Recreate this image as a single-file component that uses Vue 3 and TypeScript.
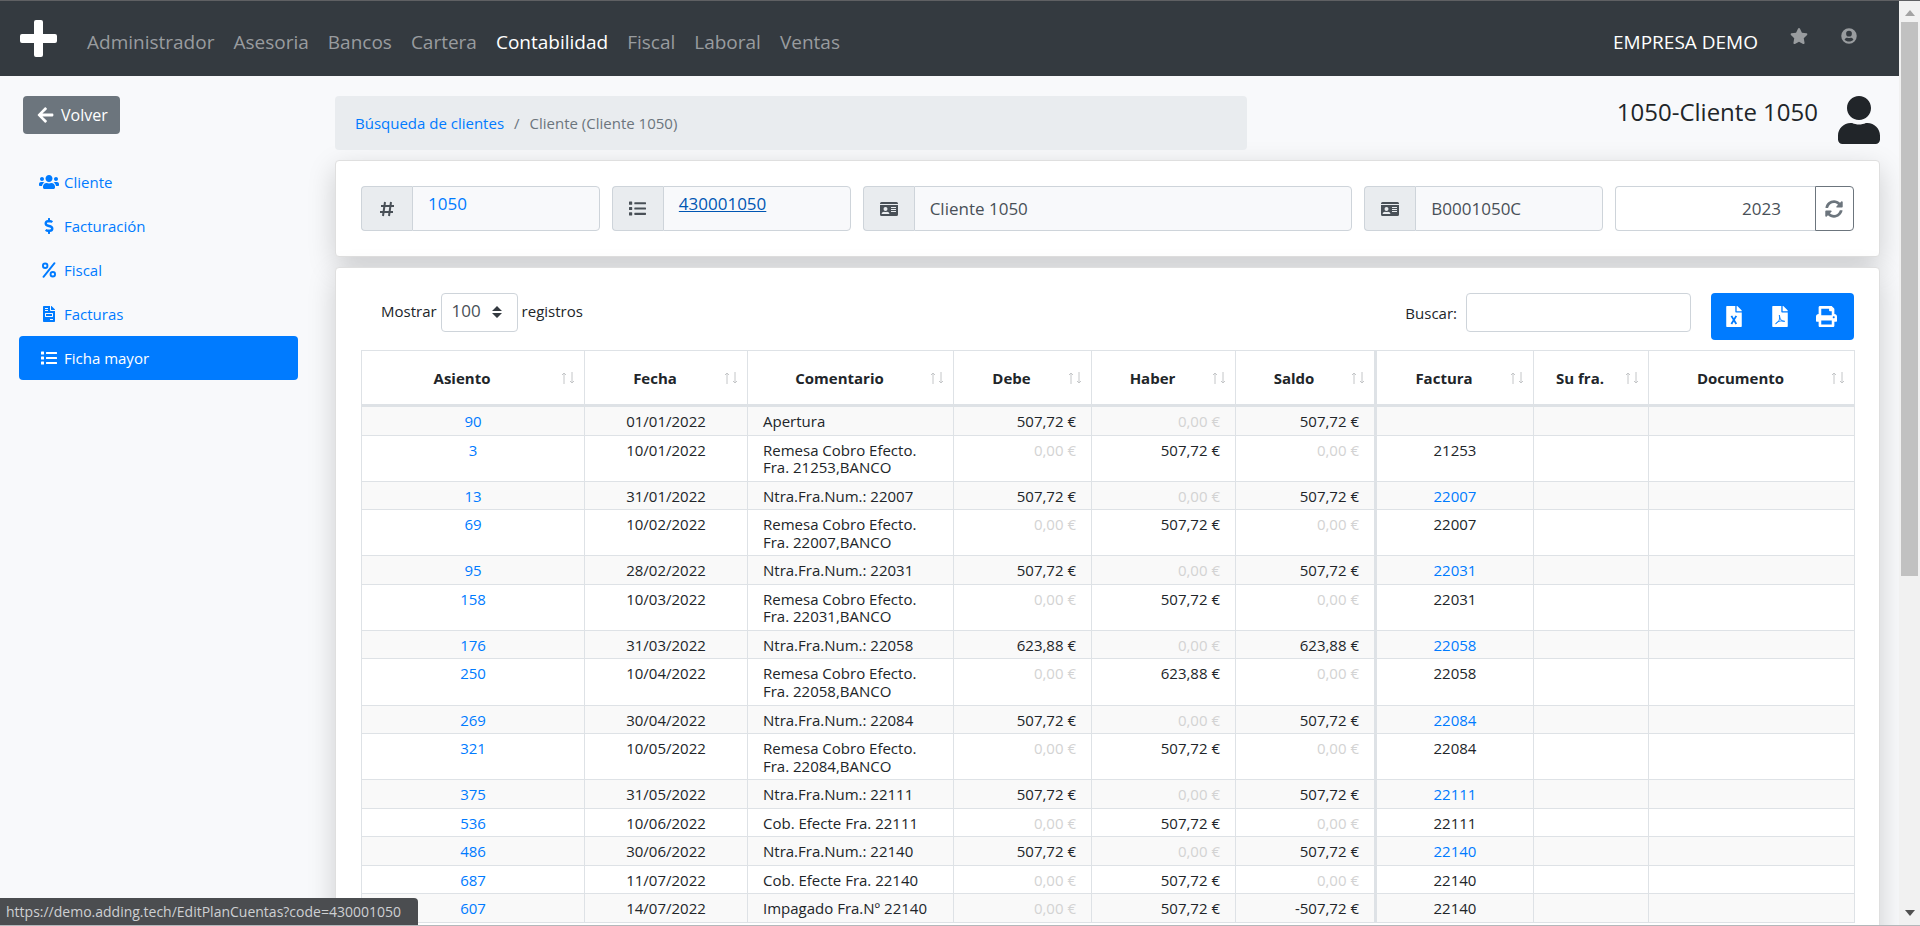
<script setup lang="ts">
import { ref } from 'vue'

interface Row {
  asiento: string
  fecha: string
  comentario: string
  debe: string
  haber: string
  saldo: string
  factura: string
  linked: boolean
}

const menu = ['Administrador', 'Asesoria', 'Bancos', 'Cartera', 'Contabilidad', 'Fiscal', 'Laboral', 'Ventas']
const current = 'Contabilidad'

const sections = [
  { label: 'Cliente', icon: 'users' },
  { label: 'Facturación', icon: 'dollar' },
  { label: 'Fiscal', icon: 'percent' },
  { label: 'Facturas', icon: 'invoice' },
  { label: 'Ficha mayor', icon: 'list' },
]
const section = 'Ficha mayor'

const columns = [
  { label: 'Asiento', cls: 'c-asiento' },
  { label: 'Fecha', cls: 'c-fecha' },
  { label: 'Comentario', cls: 'c-comentario' },
  { label: 'Debe', cls: 'c-debe' },
  { label: 'Haber', cls: 'c-haber' },
  { label: 'Saldo', cls: 'c-saldo' },
  { label: 'Factura', cls: 'c-factura' },
  { label: 'Su fra.', cls: 'c-sufra' },
  { label: 'Documento', cls: 'c-documento' },
]

const ZERO = '0,00 €'
const AMOUNT = '507,72 €'

function row(asiento: string, fecha: string, comentario: string, debe: string, haber: string, saldo: string, factura: string, linked = false): Row {
  return { asiento, fecha, comentario, debe, haber, saldo, factura, linked }
}

const rows: Row[] = [
  row('90', '01/01/2022', 'Apertura', AMOUNT, ZERO, AMOUNT, ''),
  row('3', '10/01/2022', 'Remesa Cobro Efecto. Fra. 21253,BANCO', ZERO, AMOUNT, ZERO, '21253'),
  row('13', '31/01/2022', 'Ntra.Fra.Num.: 22007', AMOUNT, ZERO, AMOUNT, '22007', true),
  row('69', '10/02/2022', 'Remesa Cobro Efecto. Fra. 22007,BANCO', ZERO, AMOUNT, ZERO, '22007'),
  row('95', '28/02/2022', 'Ntra.Fra.Num.: 22031', AMOUNT, ZERO, AMOUNT, '22031', true),
  row('158', '10/03/2022', 'Remesa Cobro Efecto. Fra. 22031,BANCO', ZERO, AMOUNT, ZERO, '22031'),
  row('176', '31/03/2022', 'Ntra.Fra.Num.: 22058', '623,88 €', ZERO, '623,88 €', '22058', true),
  row('250', '10/04/2022', 'Remesa Cobro Efecto. Fra. 22058,BANCO', ZERO, '623,88 €', ZERO, '22058'),
  row('269', '30/04/2022', 'Ntra.Fra.Num.: 22084', AMOUNT, ZERO, AMOUNT, '22084', true),
  row('321', '10/05/2022', 'Remesa Cobro Efecto. Fra. 22084,BANCO', ZERO, AMOUNT, ZERO, '22084'),
  row('375', '31/05/2022', 'Ntra.Fra.Num.: 22111', AMOUNT, ZERO, AMOUNT, '22111', true),
  row('536', '10/06/2022', 'Cob. Efecte Fra. 22111', ZERO, AMOUNT, ZERO, '22111'),
  row('486', '30/06/2022', 'Ntra.Fra.Num.: 22140', AMOUNT, ZERO, AMOUNT, '22140', true),
  row('687', '11/07/2022', 'Cob. Efecte Fra. 22140', ZERO, AMOUNT, ZERO, '22140'),
  row('607', '14/07/2022', 'Impagado Fra.Nº 22140', ZERO, AMOUNT, '-507,72 €', '22140'),
]

const year = ref('2023')
const pageSize = ref('100')
const search = ref('')
</script>

<template>
  <div class="window">
    <svg class="sprite" aria-hidden="true">
      <symbol id="i-users" viewBox="0 0 640 512">
        <path d="M96 224c35.3 0 64-28.7 64-64s-28.7-64-64-64-64 28.7-64 64 28.7 64 64 64zm448 0c35.3 0 64-28.7 64-64s-28.7-64-64-64-64 28.7-64 64 28.7 64 64 64zm32 32h-64c-17.6 0-33.5 7.1-45.1 18.6 40.3 22.1 68.9 62 75.1 109.4h66c17.7 0 32-14.3 32-32v-32c0-35.3-28.7-64-64-64zm-256 0c61.9 0 112-50.1 112-112S381.9 32 320 32 208 82.1 208 144s50.1 112 112 112zm76.8 32h-8.3c-20.8 10-43.9 16-68.5 16s-47.6-6-68.5-16h-8.3C179.6 288 128 339.6 128 403.2V432c0 26.5 21.5 48 48 48h288c26.5 0 48-21.5 48-48v-28.8c0-63.6-51.6-115.2-115.2-115.2zm-223.7-13.4C161.5 263.1 145.6 256 128 256H64c-35.3 0-64 28.7-64 64v32c0 17.7 14.3 32 32 32h65.9c6.3-47.4 34.9-87.3 75.2-109.4z" />
      </symbol>
      <symbol id="i-dollar" viewBox="0 0 288 512">
        <path d="M209.2 233.4l-108-31.6C88.7 198.2 80 186.5 80 173.5c0-16.3 13.2-29.5 29.5-29.5h66.3c12.2 0 24.2 3.7 34.2 10.5 6.1 4.1 14.3 3.1 19.5-2l34.8-34c7.1-6.9 6.1-18.4-1.8-24.5C238 74.8 207.4 64.1 176 64V16c0-8.8-7.2-16-16-16h-32c-8.8 0-16 7.2-16 16v48h-2.5C45.8 64-5.4 118.7.5 183.6c4.2 46.1 39.4 83.6 83.8 96.6l102.5 30c12.5 3.7 21.2 15.3 21.2 28.3 0 16.3-13.2 29.5-29.5 29.5h-66.3C100 368 88 364.3 78 357.5c-6.1-4.1-14.3-3.1-19.5 2l-34.8 34c-7.1 6.9-6.1 18.4 1.8 24.5 24.5 19.2 55.1 29.9 86.5 30v48c0 8.8 7.2 16 16 16h32c8.8 0 16-7.2 16-16v-48.2c46.6-.9 90.3-28.6 105.7-72.7 21.5-61.6-14.6-124.8-72.5-141.7z" />
      </symbol>
      <symbol id="i-percent" viewBox="0 0 448 512">
        <g fill="none" stroke="currentColor" stroke-width="60" stroke-linecap="round">
          <circle cx="102" cy="120" r="72" />
          <circle cx="346" cy="392" r="72" />
          <path d="M400 36L48 476" />
        </g>
      </symbol>
      <symbol id="i-invoice" viewBox="0 0 384 512">
        <path fill-rule="evenodd" d="M224 136V0H24C10.700 0 0 10.700 0 24v464c0 13.300 10.700 24 24 24h336c13.300 0 24-10.700 24-24V160H248c-13.200 0-24-10.800-24-24zM64 72c0-4 4-8 8-8h80c4 0 8 4 8 8v16c0 4-4 8-8 8H72c-4 0-8-4-8-8V72zm0 80v-16c0-4 4-8 8-8h80c4 0 8 4 8 8v16c0 4-4 8-8 8H72c-4 0-8-4-8-8zm256 288c0 4-4 8-8 8h-80c-4 0-8-4-8-8v-16c0-4 4-8 8-8h80c4 0 8 4 8 8v16zm0-200v96c0 9-7 16-16 16H80c-9 0-16-7-16-16v-96c0-9 7-16 16-16h224c9 0 16 7 16 16zM96 256v64h192v-64H96zM384 122v6H256V0h6c6 0 12 2 17 7l98 98c4 4 7 11 7 17z" />
      </symbol>
      <symbol id="i-list" viewBox="0 0 512 512">
        <path d="M80 368H16a16 16 0 0 0-16 16v64a16 16 0 0 0 16 16h64a16 16 0 0 0 16-16v-64a16 16 0 0 0-16-16zm0-320H16A16 16 0 0 0 0 64v64a16 16 0 0 0 16 16h64a16 16 0 0 0 16-16V64a16 16 0 0 0-16-16zm0 160H16a16 16 0 0 0-16 16v64a16 16 0 0 0 16 16h64a16 16 0 0 0 16-16v-64a16 16 0 0 0-16-16zm416 176H176a16 16 0 0 0-16 16v32a16 16 0 0 0 16 16h320a16 16 0 0 0 16-16v-32a16 16 0 0 0-16-16zm0-320H176a16 16 0 0 0-16 16v32a16 16 0 0 0 16 16h320a16 16 0 0 0 16-16V80a16 16 0 0 0-16-16zm0 160H176a16 16 0 0 0-16 16v32a16 16 0 0 0 16 16h320a16 16 0 0 0 16-16v-32a16 16 0 0 0-16-16z" />
      </symbol>
      <symbol id="i-idcard" viewBox="0 0 576 512">
        <path fill-rule="evenodd" d="M48 32h480a48 48 0 0 1 48 48v16H0V80a48 48 0 0 1 48-48zM0 128h576v304a48 48 0 0 1-48 48H48a48 48 0 0 1-48-48V128zm176 64a64 64 0 1 0 0 128 64 64 0 1 0 0-128zM67 416h218c10 0 17-10 14-19-10-31-40-54-75-54-29 12-66 12-96 0-35 0-65 23-75 54-3 9 4 19 14 19zM360 192c-4 0-8 4-8 8v16c0 4 4 8 8 8h144c4 0 8-4 8-8v-16c0-4-4-8-8-8H360zm0 64c-4 0-8 4-8 8v16c0 4 4 8 8 8h144c4 0 8-4 8-8v-16c0-4-4-8-8-8H360zm0 64c-4 0-8 4-8 8v16c0 4 4 8 8 8h144c4 0 8-4 8-8v-16c0-4-4-8-8-8H360z" />
      </symbol>
      <symbol id="i-file" viewBox="0 0 384 512">
        <path d="M224 136V0H24C10.700 0 0 10.700 0 24v464c0 13.300 10.700 24 24 24h336c13.300 0 24-10.700 24-24V160H248c-13.200 0-24-10.800-24-24zm160-14.100v6.100H256V0h6.100c6.400 0 12.500 2.500 17 7l97.900 98c4.500 4.500 7 10.600 7 16.900z" />
      </symbol>
    </svg>

    <div class="page">
      <nav class="navbar">
        <a href="#" class="logo" aria-label="Inicio">
          <svg viewBox="0 0 37 37"><path d="M16 0h5q2 0 2 2v12h12q2 0 2 2v5q0 2-2 2H23v12q0 2-2 2h-5q-2 0-2-2V23H2q-2 0-2-2v-5q0-2 2-2h12V2q0-2 2-2z" /></svg>
        </a>
        <a v-for="item in menu" :key="item" href="#" class="nav-link" :class="{ active: item === current }">{{ item }}</a>
        <a href="#" class="company">EMPRESA DEMO</a>
        <a href="#" class="nav-icon" aria-label="Favoritos">
          <svg viewBox="0 0 576 512" width="18" height="16"><path d="M259.300 17.800L194 150.200 47.900 171.500c-26.200 3.800-36.700 36.100-17.700 54.600l105.700 103-25 145.500c-4.500 26.300 23.200 46 46.400 33.700L288 439.600l130.700 68.700c23.200 12.200 50.900-7.400 46.400-33.700l-25-145.500 105.700-103c19-18.500 8.500-50.800-17.700-54.600L382 150.200 316.700 17.800c-11.700-23.600-45.600-23.900-57.400 0z" /></svg>
        </a>
        <a href="#" class="nav-icon" aria-label="Usuario">
          <svg viewBox="0 0 496 512" width="16" height="16"><path fill-rule="evenodd" d="M248 8a248 248 0 1 0 0 496 248 248 0 1 0 0-496zM248 88a92 92 0 1 1 0 184 92 92 0 1 1 0-184zM248 432c-58 0-108-22-142-66 20-36 50-56 88-56 36 14 72 14 108 0 38 0 70 20 88 56-34 44-84 66-142 66z" /></svg>
        </a>
      </nav>

      <div class="body">
        <aside class="sidebar">
          <button type="button" class="back">
            <svg viewBox="0 0 448 512" width="17" height="18"><path d="M257.500 445.100l-22.200 22.200c-9.400 9.400-24.600 9.400-33.900 0L7 273c-9.400-9.400-9.400-24.600 0-33.900L201.400 44.700c9.400-9.400 24.600-9.400 33.900 0l22.200 22.200c9.500 9.500 9.300 25-.4 34.300L136.600 216H424c13.300 0 24 10.700 24 24v32c0 13.300-10.700 24-24 24H136.600l120.500 114.800c9.800 9.300 10 24.800.4 34.300z" /></svg>
            Volver
          </button>
          <nav class="side-menu">
            <a v-for="s in sections" :key="s.label" href="#" class="side-link" :class="{ active: s.label === section }">
              <svg class="side-icon"><use :href="'#i-' + s.icon" /></svg>{{ s.label }}
            </a>
          </nav>
        </aside>

        <main class="main">
          <header class="heading">
            <nav class="breadcrumb"><a href="#">Búsqueda de clientes</a><span>/</span><span>Cliente (Cliente 1050)</span></nav>
            <div class="client">
              <h1>1050-Cliente 1050</h1>
              <svg viewBox="0 0 448 512" width="42" height="48"><path d="M224 256c70.700 0 128-57.300 128-128S294.700 0 224 0 96 57.300 96 128s57.300 128 128 128zm89.600 32h-16.700c-22.200 10.200-46.900 16-72.900 16s-50.600-5.800-72.900-16h-16.700C60.200 288 0 348.200 0 422.400V464c0 26.500 21.500 48 48 48h352c26.500 0 48-21.500 48-48v-41.600c0-74.200-60.200-134.400-134.400-134.400z" /></svg>
            </div>
          </header>

          <section class="card filters">
            <div class="group">
              <span class="addon"><svg viewBox="0 0 16 16" width="16" height="16"><path d="M6 1L4 15M12 1l-2 14M2 5h13M1 11h13" fill="none" stroke="currentColor" stroke-width="2" /></svg></span>
              <div class="field linkbox"><a href="#">1050</a></div>
            </div>
            <div class="group">
              <span class="addon"><svg width="17" height="17"><use href="#i-list" /></svg></span>
              <div class="field linkbox"><a href="#" class="hover">430001050</a></div>
            </div>
            <div class="group wide">
              <span class="addon"><svg width="18" height="16"><use href="#i-idcard" /></svg></span>
              <input class="field" type="text" value="Cliente 1050" aria-label="Nombre" readonly />
            </div>
            <div class="group">
              <span class="addon"><svg width="18" height="16"><use href="#i-idcard" /></svg></span>
              <input class="field" type="text" value="B0001050C" aria-label="NIF" readonly />
            </div>
            <div class="group">
              <input v-model="year" class="field year" type="text" aria-label="Ejercicio" />
              <button type="button" class="refresh" aria-label="Actualizar">
                <svg viewBox="0 0 512 512" width="18" height="18"><path d="M370.720 133.280C339.458 104.008 298.888 87.962 255.848 88c-77.458.068-144.328 53.178-162.791 126.850-1.344 5.363-6.122 9.150-11.651 9.150H24.103c-7.498 0-13.194-6.807-11.807-14.176C33.933 94.924 134.813 8 256 8c66.448 0 126.791 26.136 171.315 68.685L463.030 40.970C478.149 25.851 504 36.559 504 57.941V192c0 13.255-10.745 24-24 24H345.941c-21.382 0-32.090-25.851-16.971-40.971l41.750-41.749zM32 296h134.059c21.382 0 32.090 25.851 16.971 40.971l-41.750 41.750c31.262 29.273 71.835 45.319 114.876 45.280 77.418-.070 144.315-53.144 162.787-126.849 1.344-5.363 6.122-9.150 11.651-9.150h57.304c7.498 0 13.194 6.807 11.807 14.176C478.067 417.076 377.187 504 256 504c-66.448 0-126.791-26.136-171.315-68.685L48.970 471.030C33.851 486.149 8 475.441 8 454.059V320c0-13.255 10.745-24 24-24z" /></svg>
              </button>
            </div>
          </section>

          <section class="card ledger">
            <div class="toolbar">
              <label class="length">Mostrar
                <span class="select"><select v-model="pageSize"><option>100</option></select><svg viewBox="0 0 10 12" width="10" height="12"><path d="M5 0l5 5H0zM0 7h10l-5 5z" /></svg></span>
                registros</label>
              <label class="search">Buscar: <input v-model="search" type="search" /></label>
              <div class="exports">
                <button type="button" aria-label="Excel">
                  <svg viewBox="0 0 384 512" width="16" height="21"><use href="#i-file" width="384" height="512" /><path class="ink bold" d="M128 240l120 200M248 240L128 440" /></svg>
                </button>
                <button type="button" aria-label="PDF">
                  <svg viewBox="0 0 384 512" width="16" height="21"><use href="#i-file" width="384" height="512" /><path class="ink" d="M176 224c30 90-20 170-90 210 20-50 140-90 220-60-60 10-130-50-130-150z" /></svg>
                </button>
                <button type="button" aria-label="Imprimir">
                  <svg viewBox="0 0 512 512" width="21" height="21"><path fill-rule="evenodd" d="M448 192V77.250c0-8.490-3.370-16.620-9.370-22.630L393.370 9.370c-6-6-14.140-9.370-22.630-9.370H96C78.330 0 64 14.330 64 32v160c-35.350 0-64 28.650-64 64v112c0 8.840 7.160 16 16 16h48v96c0 17.670 14.330 32 32 32h320c17.670 0 32-14.330 32-32v-96h48c8.840 0 16-7.160 16-16V256c0-35.350-28.650-64-64-64zm-64 256H128v-96h256v96zm0-224H128V64h192v48c0 8.840 7.160 16 16 16h48v96zm48 72c-13.250 0-24-10.750-24-24 0-13.260 10.750-24 24-24s24 10.740 24 24c0 13.250-10.750 24-24 24z" /></svg>
                </button>
              </div>
            </div>

            <table>
              <thead>
                <tr>
                  <th v-for="c in columns" :key="c.label" :class="c.cls" scope="col">
                    <div class="th"><span>{{ c.label }}</span><svg viewBox="0 0 14 12" width="14" height="12"><path d="M3 12V1M1 3l2-2 2 2M11 0v11M9 9l2 2 2-2" /></svg></div>
                  </th>
                </tr>
              </thead>
              <tbody>
                <tr v-for="r in rows" :key="r.asiento">
                  <td class="center"><a href="#">{{ r.asiento }}</a></td>
                  <td class="center">{{ r.fecha }}</td>
                  <td>{{ r.comentario }}</td>
                  <td class="amount" :class="{ zero: r.debe === ZERO }">{{ r.debe }}</td>
                  <td class="amount" :class="{ zero: r.haber === ZERO }">{{ r.haber }}</td>
                  <td class="amount split" :class="{ zero: r.saldo === ZERO }">{{ r.saldo }}</td>
                  <td class="center"><a v-if="r.linked" href="#">{{ r.factura }}</a><template v-else>{{ r.factura }}</template></td>
                  <td></td>
                  <td></td>
                </tr>
              </tbody>
            </table>
          </section>
        </main>
      </div>
    </div>

    <div class="scrollbar" aria-hidden="true">
      <svg viewBox="0 0 10 6" width="10" height="6" class="up"><path d="M5 0l5 6H0z" /></svg>
      <div class="thumb"></div>
      <svg viewBox="0 0 10 6" width="10" height="6" class="down"><path d="M0 0h10L5 6z" /></svg>
    </div>

    <div class="status">https://demo.adding.tech/EditPlanCuentas?code=430001050</div>
  </div>
</template>

<style>
body {
  margin: 0;
}
</style>

<style scoped>
.window {
  position: relative;
  display: flex;
  box-sizing: border-box;
  height: 100vh;
  overflow: hidden;
  border-top: 1px solid #5f6063;
  border-bottom: 1px solid #b4b8bb;
  background: #f8f9fb;
  color: #212529;
  font-family: "Segoe UI", "Open Sans", "Noto Sans", sans-serif;
  font-size: 15px;
  line-height: 24px;
}
.window * {
  box-sizing: border-box;
}
.sprite {
  position: absolute;
  width: 0;
  height: 0;
}
svg {
  fill: currentColor;
  flex: none;
}
a {
  color: #007bff;
  text-decoration: none;
}
button,
input,
select {
  font: inherit;
  color: inherit;
  margin: 0;
}
.page {
  flex: 1;
  min-width: 0;
  height: 100%;
  overflow: hidden;
}

.navbar {
  display: flex;
  align-items: center;
  height: 75px;
  padding: 6px 41px 0 20px;
  background: #343a40;
  font-size: 19px;
}
.logo {
  color: #fff;
  margin-right: 30px;
  padding-bottom: 6px;
}
.logo svg {
  display: block;
  width: 37px;
  height: 37px;
}
.nav-link {
  color: #999c9f;
  margin-right: 19px;
}
.nav-link.active {
  color: #fff;
}
.company {
  color: #fff;
  margin-left: auto;
}
.nav-icon {
  display: flex;
  width: 18px;
  justify-content: center;
  margin-left: 32px;
  padding-bottom: 12px;
  color: #999c9f;
}

.body {
  display: flex;
  gap: 37px;
  padding: 20px 19px 0;
}
.sidebar {
  width: 279px;
  flex: none;
}
.back {
  display: flex;
  align-items: center;
  gap: 7px;
  height: 38px;
  margin-left: 4px;
  padding: 0 12px 0 14px;
  border: 0;
  border-radius: 4px;
  background: #6c757d;
  color: #fff;
  font-size: 16px;
}
.side-menu {
  margin-top: 26px;
}
.side-link {
  display: flex;
  align-items: center;
  gap: 5px;
  height: 44px;
  padding: 0 20px;
  border-radius: 4px;
}
.side-link.active {
  background: #007bff;
  color: #fff;
}
.side-icon {
  width: 20px;
  height: 16px;
}

.main {
  flex: 1;
  min-width: 0;
}
.heading {
  display: flex;
  justify-content: space-between;
  align-items: flex-start;
  margin-bottom: 10px;
}
.breadcrumb {
  display: flex;
  align-items: center;
  gap: 10px;
  width: 59%;
  height: 54px;
  padding: 0 20px;
  border-radius: 4px;
  background: #e9ecef;
  color: #6c757d;
}
.client {
  display: flex;
  gap: 20px;
}
h1 {
  margin: 0;
  font-size: 24px;
  font-weight: 500;
  line-height: 32px;
}

.card {
  border: 1px solid #dfdfdf;
  border-radius: 4px;
  background: #fff;
  box-shadow: 0 9px 28px rgba(0, 0, 0, 0.175);
}
.filters {
  display: grid;
  grid-template-columns: repeat(12, minmax(0, 1fr));
  gap: 12px;
  padding: 25px;
  margin-bottom: 10px;
}
.group {
  display: flex;
  grid-column: span 2;
  height: 45px;
  font-size: 17px;
  color: #495057;
}
.group.wide {
  grid-column: span 4;
}
.addon {
  display: flex;
  align-items: center;
  justify-content: center;
  width: 51px;
  flex: none;
  border: 1px solid #ced4da;
  border-right: 0;
  border-radius: 4px 0 0 4px;
  background: #e9ecef;
}
.field {
  flex: 1;
  min-width: 0;
  padding: 0 15px;
  border: 1px solid #ced4da;
  border-radius: 0 4px 4px 0;
  background: #f8f9fb;
}
.linkbox {
  padding-top: 5px;
}
.hover {
  color: #0056b3;
  text-decoration: underline;
}
.year {
  border-right: 0;
  border-radius: 4px 0 0 4px;
  padding-right: 34px;
  background: #fff;
  text-align: right;
}
.refresh {
  display: flex;
  align-items: center;
  justify-content: center;
  width: 39px;
  padding: 0;
  border: 1px solid #6c757d;
  border-radius: 0 4px 4px 0;
  background: #fff;
  color: #6c757d;
}

.ledger {
  padding: 25px 25px 40px;
}
.toolbar {
  display: flex;
  align-items: flex-start;
  margin-bottom: 10px;
}
.length {
  display: flex;
  align-items: baseline;
  gap: 4px;
  height: 39px;
  margin-left: 20px;
}
.select {
  position: relative;
  display: flex;
}
.select select {
  width: 77px;
  height: 39px;
  padding: 0 10px 3px;
  border: 1px solid #ced4da;
  border-radius: 4px;
  background: #fff;
  color: #495057;
  font-size: 17px;
  appearance: none;
}
.select svg {
  position: absolute;
  right: 16px;
  top: 13px;
  color: #343a40;
  pointer-events: none;
}
.search {
  display: flex;
  align-items: center;
  gap: 9px;
  height: 39px;
  margin-left: auto;
}
.search input {
  width: 225px;
  height: 39px;
  padding: 0 10px;
  border: 1px solid #ced4da;
  border-radius: 4px;
  background: #fff;
}
.exports {
  display: flex;
  width: 143px;
  margin-left: 20px;
  padding-right: 4px;
  border-radius: 4px;
  background: #007bff;
}
.exports button {
  display: flex;
  flex: 1;
  align-items: center;
  justify-content: center;
  height: 47px;
  padding: 0;
  border: 0;
  background: none;
  color: #fff;
}
.ink {
  fill: none;
  stroke: #007bff;
  stroke-width: 22;
}
.ink.bold {
  stroke-width: 44;
}

table {
  width: 100%;
  table-layout: fixed;
  border-collapse: collapse;
  border: 1px solid #dee2e6;
}
th,
td {
  border: 1px solid #dee2e6;
}
th {
  height: 55px;
  padding: 0 9px;
  border-bottom-width: 3px;
  font-weight: 700;
}
.th {
  display: flex;
  align-items: center;
}
.th span {
  flex: 1;
  padding-right: 8px;
}
.th svg {
  fill: none;
  stroke: #c4c6c8;
}
.c-asiento { width: 223px; }
.c-fecha { width: 163px; }
.c-comentario { width: 206px; }
.c-debe { width: 138px; }
.c-haber { width: 144px; }
.c-saldo { width: 140px; }
.c-factura { width: 158px; }
.c-sufra { width: 115px; }
.c-documento { width: 206px; }
.c-saldo,
.split {
  border-right-width: 3px;
}
td {
  padding: 6px 15px 4px;
  line-height: 1.17;
  vertical-align: top;
}
tbody tr:nth-child(odd) {
  background: #f9f9f9;
}
.center {
  text-align: center;
}
.amount {
  text-align: right;
}
.zero {
  color: #d3d3d3;
}

.scrollbar {
  display: flex;
  flex-direction: column;
  align-items: center;
  width: 21px;
  flex: none;
  background: #f1f1f1;
}
.scrollbar .up {
  margin: 9px 0 6px;
  color: #a3a3a3;
}
.scrollbar .down {
  margin: auto 0 9px;
  color: #505050;
}
.thumb {
  width: 17px;
  height: 60%;
  background: #c1c1c1;
}

.status {
  position: absolute;
  left: 0;
  bottom: 0;
  padding: 2px 17px 2px 6px;
  border-radius: 0 4px 0 0;
  background: #4b4d50;
  color: #ced0d3;
  font-size: 14px;
  line-height: 23px;
}
</style>
